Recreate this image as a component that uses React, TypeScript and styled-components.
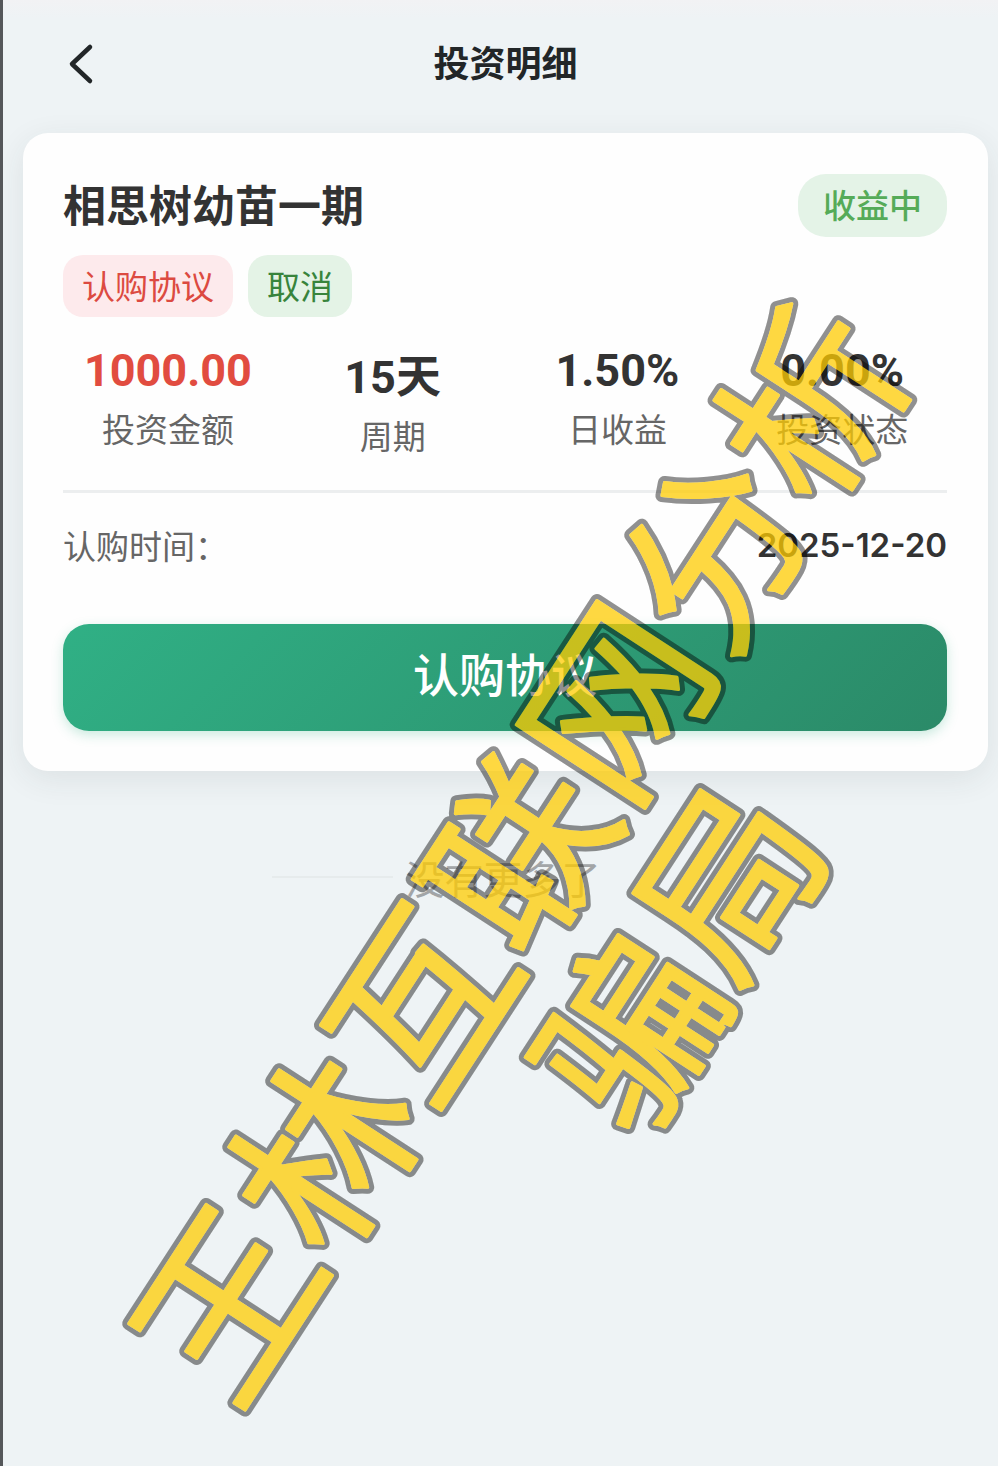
import React from "react";
import styled, { createGlobalStyle } from "styled-components";

const cjk = `"Noto Sans CJK SC", sans-serif`;

const GlobalStyle = createGlobalStyle`
  *, *::before, *::after { box-sizing: border-box; }
  html, body { margin: 0; background: #eef3f5; }
  body { font-family: Roboto, ${cjk}; color: #333; }
  h1, h2, p, dl, dd, dt { margin: 0; }
  button { border: 0; padding: 0; font: inherit; cursor: pointer; }
`;

const Page = styled.div`
  position: relative;
  min-height: 100vh;
  overflow: hidden;
  border-left: 3px solid #55575a;
  background: linear-gradient(#f2f2f4 0, #eef3f5 18px);
`;

const Header = styled.header`
  display: grid;
  grid-template-columns: 1fr auto 1fr;
  align-items: center;
  height: 128px;
  padding: 0 49px 0 59px;
`;

const BackButton = styled.button`
  display: flex;
  justify-self: start;
  background: none;
  color: #222628;
`;

const PageTitle = styled.h1`
  padding-bottom: 6px;
  font: 700 36px/52px ${cjk};
  color: #222628;
`;

const Card = styled.main`
  margin: 5px 10px 0 20px;
  padding: 40px 41px 40px 40px;
  border-radius: 25px;
  background: #fefefe;
  box-shadow: 0 8px 32px rgba(40, 50, 60, 0.09);
`;

const CardHead = styled.div`
  display: flex;
  align-items: center;
  justify-content: space-between;
`;

const ProductName = styled.h2`
  padding-bottom: 4px;
  font: 700 43px/60px ${cjk};
  color: #333;
`;

const Status = styled.span`
  padding: 0 25px 3px;
  border-radius: 28px;
  background: #e4f3e7;
  color: #55ab58;
  font: 500 33px/60px ${cjk};
`;

const Tags = styled.div`
  display: flex;
  gap: 15px;
  margin-top: 18px;
`;

const Tag = styled.button<{ $tone: "red" | "green" }>`
  padding: 0 19px 2px;
  border-radius: 20px;
  background: ${(p) => (p.$tone === "red" ? "#fdeaec" : "#e4f3e6")};
  color: ${(p) => (p.$tone === "red" ? "#dc4a41" : "#38843c")};
  font: 400 33px/60px ${cjk};
`;

const Stats = styled.dl`
  display: grid;
  grid-template-columns: repeat(4, 1fr);
  gap: 15px;
  margin-top: 26px;
  padding-bottom: 30px;
  border-bottom: 3px solid #eceeef;
  text-align: center;
`;

const Stat = styled.div<{ $mixed?: boolean }>`
  display: flex;
  flex-direction: column-reverse;
  justify-content: flex-end;
  padding-top: ${(p) => (p.$mixed ? 7 : 0)}px;
`;

const StatValue = styled.dd<{ $accent?: boolean }>`
  color: ${(p) => (p.$accent ? "#e14c40" : "#333")};
  font: 700 45px/56px Roboto, ${cjk};
`;

const StatLabel = styled.dt`
  margin-top: 4px;
  color: #666;
  font: 400 33px/50px ${cjk};
`;

const InfoRow = styled.div`
  display: flex;
  align-items: center;
  justify-content: space-between;
  margin: 27px 0 54px;
`;

const InfoLabel = styled.span`
  color: #666;
  font: 400 33px/50px ${cjk};
`;

const InfoValue = styled.time`
  color: #333;
  font: 600 33px/50px Inter, ${cjk};
`;

const AgreementButton = styled.button`
  display: block;
  width: 100%;
  height: 107px;
  padding-bottom: 12px;
  border-radius: 26px;
  background: linear-gradient(135deg, #30b085, #2b8a68);
  box-shadow: 0 4px 12px rgba(46, 174, 132, 0.25);
  color: #fff;
  font: 500 46px/66px ${cjk};
`;

const ListEnd = styled.footer`
  display: grid;
  grid-template-columns: 1fr auto 1fr;
  align-items: center;
  gap: 12px;
  margin-top: 78px;
  padding: 0 264px 0 269px;
  color: #a2a5a7;
  font: 400 39px/56px ${cjk};
`;

const EndLine = styled.span<{ $hidden?: boolean }>`
  height: 2px;
  background: ${(p) => (p.$hidden ? "transparent" : "#e6ebec")};
`;

const WatermarkLayer = styled.svg`
  position: absolute;
  top: 0;
  left: -3px;
  width: calc(100% + 3px);
  pointer-events: none;
  font: 400 179px ${cjk};
  text-anchor: middle;
  stroke-linejoin: round;
`;

function Watermark() {
  return (
    <WatermarkLayer viewBox="0 0 998 1466">
      <defs>
        <mask id="outline" maskUnits="userSpaceOnUse" x="0" y="0" width="998" height="1466">
          <use href="#watermark" fill="#fff" stroke="#fff" strokeWidth="13" />
          <use href="#watermark" fill="#000" stroke="#000" strokeWidth="3" />
        </mask>
      </defs>
      <rect width="998" height="1466" fill="#000" fillOpacity="0.43" mask="url(#outline)" />
      <g fill="#fc0" stroke="#fc0" strokeWidth="3" opacity="0.74">
        <g id="watermark">
          <g transform="translate(519 852) rotate(-57)">
            <text y="68">王林互联网分析</text>
            <text y="259">骗局</text>
          </g>
        </g>
      </g>
    </WatermarkLayer>
  );
}

export default function App() {
  return (
    <>
      <GlobalStyle />
      <Page lang="zh-CN">
        <Header>
          <BackButton aria-label="返回">
            <svg width="40" height="44" viewBox="0 0 40 44" fill="none" stroke="currentColor" strokeWidth="4.5" strokeLinecap="round" strokeLinejoin="round">
              <path d="M28 5 10 22 28 39" />
            </svg>
          </BackButton>
          <PageTitle>投资明细</PageTitle>
        </Header>
        <Card>
          <CardHead>
            <ProductName>相思树幼苗一期</ProductName>
            <Status>收益中</Status>
          </CardHead>
          <Tags>
            <Tag $tone="red">认购协议</Tag>
            <Tag $tone="green">取消</Tag>
          </Tags>
          <Stats>
            <Stat>
              <StatLabel>投资金额</StatLabel>
              <StatValue $accent>1000.00</StatValue>
            </Stat>
            <Stat $mixed>
              <StatLabel>周期</StatLabel>
              <StatValue>15天</StatValue>
            </Stat>
            <Stat>
              <StatLabel>日收益</StatLabel>
              <StatValue>1.50%</StatValue>
            </Stat>
            <Stat>
              <StatLabel>投资状态</StatLabel>
              <StatValue>0.00%</StatValue>
            </Stat>
          </Stats>
          <InfoRow>
            <InfoLabel>认购时间：</InfoLabel>
            <InfoValue dateTime="2025-12-20">2025-12-20</InfoValue>
          </InfoRow>
          <AgreementButton>认购协议</AgreementButton>
        </Card>
        <ListEnd>
          <EndLine />
          <p>没有更多了</p>
          <EndLine $hidden />
        </ListEnd>
        <Watermark />
      </Page>
    </>
  );
}
